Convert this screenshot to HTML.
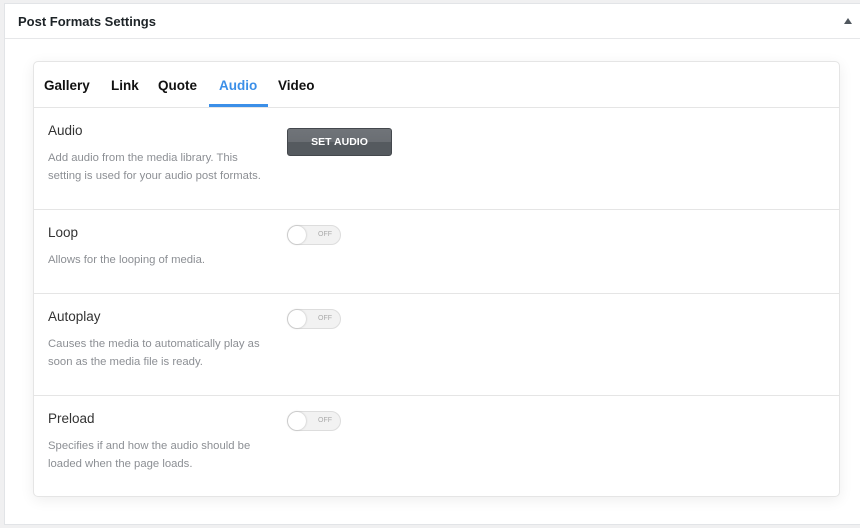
<!DOCTYPE html>
<html><head><style>
body{margin:0;width:860px;height:528px;background:#f0f0f1;font-family:"Liberation Sans",sans-serif;position:relative;overflow:hidden}
.panel{position:absolute;left:4px;top:3px;width:860px;height:520px;background:#fff;border:1px solid #e2e4e7}
.hdr{height:34px;border-bottom:1px solid #e6e7e9;position:relative}
.hdr span{position:absolute;left:13px;top:10px;font-size:13px;font-weight:600;color:#1d2327}
.arr{position:absolute;left:839px;top:14px;width:0;height:0;border-left:4px solid transparent;border-right:4px solid transparent;border-bottom:6px solid #50575e}
.card{position:absolute;left:28px;top:57px;width:805px;height:434px;border:1px solid #e5e5e5;border-radius:5px;box-shadow:0 3px 14px rgba(0,0,0,.07);background:#fff}
.tabs{height:45px;border-bottom:1px solid #e5e5e5;position:relative}
.tab{position:absolute;top:16px;font-size:13.5px;font-weight:bold;color:#111}
.tab.a{color:#3b8fe8}
.ul{position:absolute;left:175px;top:42px;width:59px;height:3px;background:#3b8fe8}
.row{position:absolute;left:0;width:805px;border-bottom:1px solid #e5e5e5}
.lbl{position:absolute;left:14px;top:15px;font-size:13.5px;color:#333}
.desc{position:absolute;left:14px;top:41px;font-size:11.3px;line-height:18px;color:#8c8f94;width:240px;white-space:nowrap}
.btn{position:absolute;left:253px;top:20px;width:103px;height:26px;border-radius:3px;background:linear-gradient(#707479 0,#6a6e73 50%,#555a5f 50%);border:1px solid #44484d;color:#fff;font-size:10.5px;font-weight:bold;text-align:center;line-height:26px}
.tg{position:absolute;left:253px;top:15px;width:52px;height:18px;border:1px solid #ddd;border-radius:10px;background:#f2f2f2}
.tg:before{content:"";position:absolute;left:0;top:0;width:18px;height:18px;border-radius:50%;background:#fff;box-shadow:0 0 2px rgba(0,0,0,.25)}
.tg span{position:absolute;left:30px;top:5px;font-size:7px;color:#aaa}
</style></head><body>
<div class="panel">
<div class="hdr"><span>Post Formats Settings</span><div class="arr"></div></div>
<div class="card">
<div class="tabs">
<div class="tab" style="left:10px">Gallery</div>
<div class="tab" style="left:77px">Link</div>
<div class="tab" style="left:124px">Quote</div>
<div class="tab a" style="left:185px">Audio</div>
<div class="tab" style="left:244px">Video</div>
<div class="ul"></div>
</div>
<div class="row" style="top:46px;height:101px"><div class="lbl">Audio</div><div class="desc">Add audio from the media library. This<br>setting is used for your audio post formats.</div><div class="btn">SET AUDIO</div></div>
<div class="row" style="top:148px;height:83px"><div class="lbl">Loop</div><div class="desc">Allows for the looping of media.</div><div class="tg"><span>OFF</span></div></div>
<div class="row" style="top:232px;height:101px"><div class="lbl">Autoplay</div><div class="desc">Causes the media to automatically play as<br>soon as the media file is ready.</div><div class="tg"><span>OFF</span></div></div>
<div class="row" style="top:334px;height:100px;border:0"><div class="lbl">Preload</div><div class="desc">Specifies if and how the audio should be<br>loaded when the page loads.</div><div class="tg"><span>OFF</span></div></div>
</div>
</div>
</body></html>
